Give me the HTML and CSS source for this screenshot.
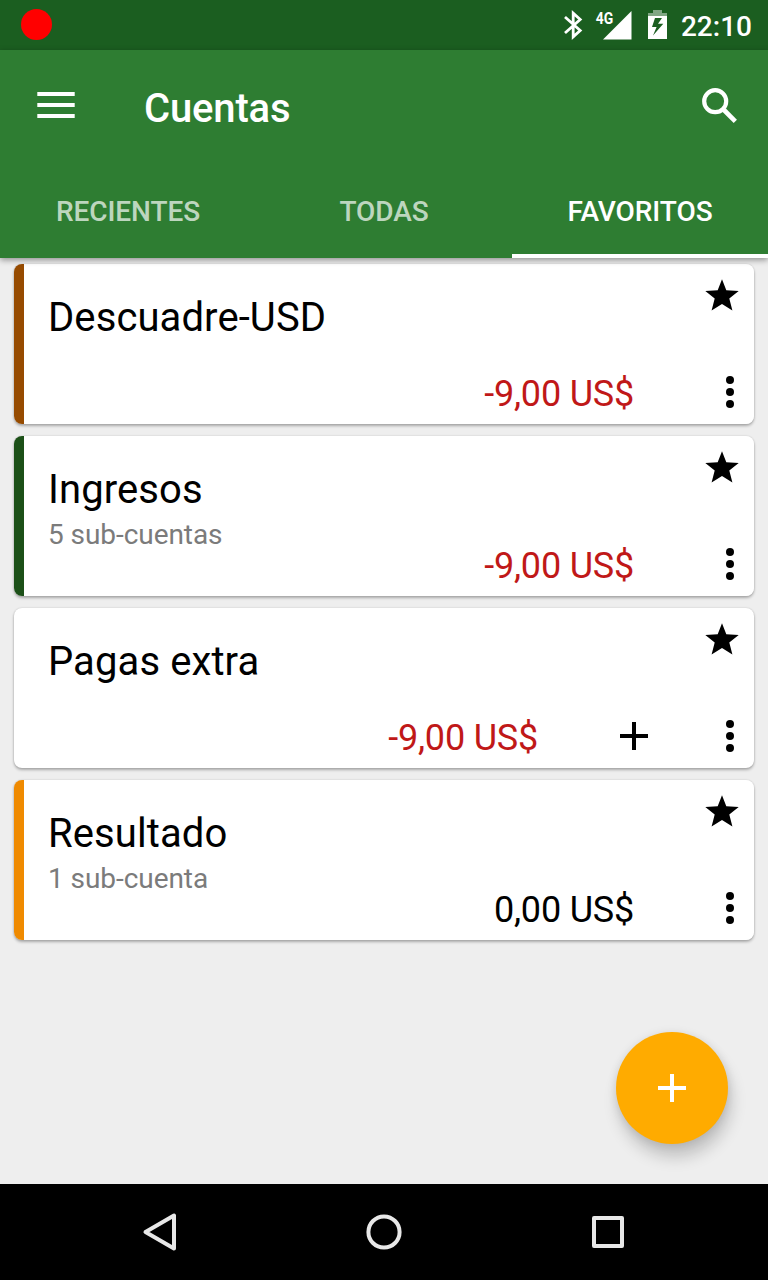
FILE: index.html
```html
<!DOCTYPE html>
<html lang="es">
<head>
<meta charset="utf-8">
<title>Cuentas</title>
<link rel="stylesheet" href="styles.css">
</head>
<body>
<svg class="defs" width="0" height="0" aria-hidden="true">
  <symbol id="star" viewBox="0 0 34 32"><path d="M17 .2 21.300 11.300 33.700 12 24.300 19.500 27.400 31.500 17 25 6.600 31.500 9.700 19.500.3 12 12.700 11.300Z"/></symbol>
  <symbol id="more" viewBox="0 0 8 32"><circle cx="4" cy="4" r="4"/><circle cx="4" cy="16" r="4"/><circle cx="4" cy="28" r="4"/></symbol>
  <symbol id="plus" viewBox="0 0 28 28"><path d="M12 0h4v12h12v4H16v12h-4V16H0v-4h12Z"/></symbol>
</svg>
<div class="screen">
  <div class="status">
    <span class="record"></span>
    <svg class="bluetooth" width="20" height="30" viewBox="0 0 20 30"><path d="M2 7 17.200 20.500 10.200 26.800V3.200L17.200 9.500 2 23" fill="none" stroke="#fff" stroke-width="2.800"/></svg>
    <svg class="signal" width="37" height="30" viewBox="0 0 37 30"><path d="M36.500 1v28.500H8Z" fill="#fff"/><text transform="translate(.7 14) scale(.82 1)">4G</text></svg>
    <svg class="battery" width="19" height="30" viewBox="0 0 19 30"><path d="M5 0h9v3h5v3H0V3h5Z" fill="#fff" opacity=".45"/><path fill-rule="evenodd" d="M0 6h19v23H0ZM7 8 4 17h4.600L5 25.500 15.300 13.700H10L14 8Z" fill="#fff"/></svg>
    <span class="clock">22:10</span>
  </div>
  <header class="appbar">
    <div class="toolbar">
      <svg class="menu" width="38" height="26" viewBox="0 0 38 26"><path d="M.3 0h37.400v4H.3ZM.3 11h37.400v4H.3ZM.3 22h37.400v4H.3Z" fill="#fff"/></svg>
      <h1 class="title">Cuentas</h1>
      <svg class="search" width="36" height="36" viewBox="0 0 36 36" fill="none" stroke="#fff"><circle cx="13.200" cy="13.200" r="11" stroke-width="4.200"/><path d="M22 22 33.300 33.300" stroke-width="4.600"/></svg>
    </div>
    <nav class="tabs">
      <span class="tab">RECIENTES</span>
      <span class="tab">TODAS</span>
      <span class="tab active">FAVORITOS</span>
    </nav>
  </header>
  <main class="accounts">
    <article class="card brown">
      <div class="card-top"><div><h2 class="name">Descuadre-USD</h2></div><svg class="star" width="34" height="32"><use href="#star"/></svg></div>
      <div class="card-bottom"><span class="balance negative">-9,00 US$</span><svg class="more" width="8" height="32"><use href="#more"/></svg></div>
    </article>
    <article class="card green">
      <div class="card-top"><div><h2 class="name">Ingresos</h2><p class="sub">5 sub-cuentas</p></div><svg class="star" width="34" height="32"><use href="#star"/></svg></div>
      <div class="card-bottom"><span class="balance negative">-9,00 US$</span><svg class="more" width="8" height="32"><use href="#more"/></svg></div>
    </article>
    <article class="card">
      <div class="card-top"><div><h2 class="name">Pagas extra</h2></div><svg class="star" width="34" height="32"><use href="#star"/></svg></div>
      <div class="card-bottom"><span class="balance negative">-9,00 US$</span><svg class="add" width="28" height="28"><use href="#plus"/></svg><svg class="more" width="8" height="32"><use href="#more"/></svg></div>
    </article>
    <article class="card orange">
      <div class="card-top"><div><h2 class="name">Resultado</h2><p class="sub">1 sub-cuenta</p></div><svg class="star" width="34" height="32"><use href="#star"/></svg></div>
      <div class="card-bottom"><span class="balance">0,00 US$</span><svg class="more" width="8" height="32"><use href="#more"/></svg></div>
    </article>
    <div class="fab"><svg width="28" height="28" fill="#fff"><use href="#plus"/></svg></div>
  </main>
  <footer class="navbar">
    <svg width="40" height="40" viewBox="0 0 40 40"><path d="M5.500 20 34 3.500v33Z"/></svg>
    <svg width="40" height="40" viewBox="0 0 40 40"><circle cx="20" cy="20" r="15.600"/></svg>
    <svg width="40" height="40" viewBox="0 0 40 40"><path d="M6 6h28v28H6Z"/></svg>
  </footer>
</div>
</body>
</html>
```
FILE: styles.css
```css
* { box-sizing: border-box; }
body { margin: 0; font-family: Roboto, "Noto Sans", sans-serif; color: #000; }
svg { display: block; flex: none; }
.defs { position: absolute; }
h1, h2, p { margin: 0; font-weight: 400; white-space: nowrap; }

.screen { display: flex; flex-direction: column; width: 768px; height: 1280px; overflow: hidden; background: #eee; }

.status { display: flex; align-items: center; height: 50px; padding: 0 16px 0 21px; background: #1b5e20; color: #fff; }
.record { width: 31px; height: 31px; margin: 0 auto 1px 0; border-radius: 50%; background: #f00; }
.bluetooth { margin-right: 12px; }
.signal { margin-right: 16px; overflow: visible; }
.signal text { font-size: 17px; font-weight: 700; fill: #fff; }
.battery { margin-right: 14px; }
.clock { font-size: 28px; font-weight: 500; line-height: 33px; padding-top: 3px; }

.appbar { z-index: 1; height: 208px; background: #2e7d32; color: #fff; box-shadow: 0 2px 6px rgba(0, 0, 0, .4); }
.toolbar { display: flex; align-items: center; height: 112px; padding: 0 30px 0 37px; }
.menu { margin: 0 69px 2px 0; }
.title { font-size: 40px; font-weight: 500; line-height: 48px; padding-top: 6px; margin-right: auto; letter-spacing: -.15px; }
.tabs { display: grid; grid-template-columns: repeat(3, 1fr); height: 96px; }
.tab { display: flex; align-items: center; justify-content: center; padding-top: 6px; border-bottom: 4px solid transparent; font-size: 28px; font-weight: 500; letter-spacing: -.07px; color: rgba(255, 255, 255, .7); }
.tab.active { color: #fff; border-bottom-color: #fff; }

.accounts { position: relative; flex: 1; display: flex; flex-direction: column; gap: 12px; padding: 6px 14px; }
.card { display: flex; flex-direction: column; justify-content: space-between; height: 160px; padding: 0 20px 16px 34px; border-radius: 8px; background: #fff; box-shadow: 0 2px 3px rgba(0, 0, 0, .28), 0 0 2px rgba(0, 0, 0, .16); }
.brown { background: linear-gradient(90deg, #964b00 10px, #fff 10px); }
.green { background: linear-gradient(90deg, #1c5018 10px, #fff 10px); }
.orange { background: linear-gradient(90deg, #ef8a00 10px, #fff 10px); }
.card-top { display: flex; justify-content: space-between; height: 112px; }
.name { margin-top: 30px; font-size: 40px; line-height: 47px; letter-spacing: .1px; }
.sub { margin-top: 5px; font-size: 28px; line-height: 33px; letter-spacing: -.06px; color: #7b7b7b; }
.star { margin: 15px -5px 0 0; }
.card-bottom { display: flex; align-items: center; justify-content: flex-end; height: 32px; }
.balance { margin-right: 92px; padding-top: 4px; font-size: 36px; line-height: 42px; letter-spacing: -.2px; }
.negative { color: #c01818; }
.balance:has(+ .add) { margin-right: 82px; }
.add { margin-right: 78px; }

.fab { position: absolute; right: 40px; bottom: 40px; display: flex; align-items: center; justify-content: center; width: 112px; height: 112px; border-radius: 50%; background: #ffab00; box-shadow: 3px 13px 16px rgba(0, 0, 0, .19), 0 1px 10px rgba(0, 0, 0, .1); }

.navbar { display: flex; align-items: center; justify-content: center; gap: 184px; height: 96px; background: #000; }
.navbar svg { fill: none; stroke: #e8e8e8; stroke-width: 4; stroke-linejoin: round; }
```
